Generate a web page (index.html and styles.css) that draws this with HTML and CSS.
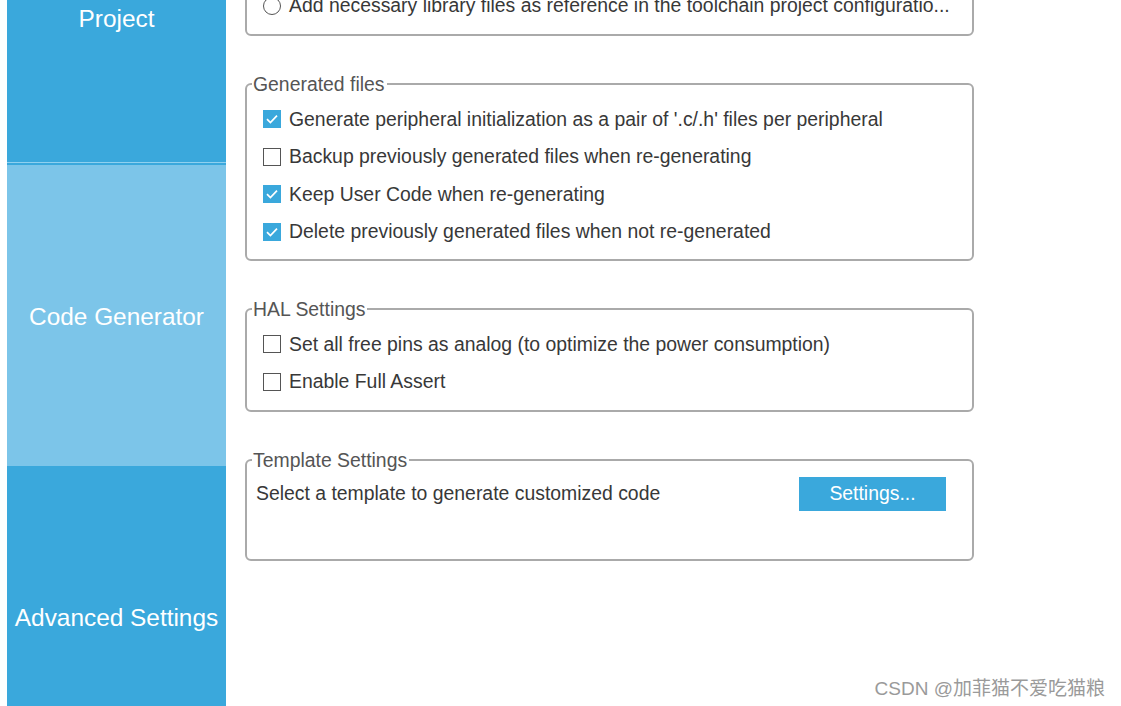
FILE: index.html
```html
<!DOCTYPE html>
<html>
<head>
<meta charset="utf-8">
<link rel="stylesheet" href="styles.css">
</head>
<body>
<div class="page">
  <nav class="sidebar">
    <div class="nav-item project">Project</div>
    <div class="nav-sep"></div>
    <div class="nav-item active">Code Generator</div>
    <div class="nav-item advanced">Advanced Settings</div>
  </nav>
  <main class="main">
    <div class="box box-top">
      <div class="row">
        <span class="radio"></span>
        <span class="label">Add necessary library files as reference in the toolchain project configuratio...</span>
      </div>
    </div>

    <fieldset class="group">
      <legend class="group-title">Generated files</legend>
      <div class="row"><span class="check on"><svg viewBox="0 0 18 18" width="18" height="18"><path d="M4 9.2 L7.4 12.6 L14 5.6" fill="none" stroke="#fff" stroke-width="1.7"/></svg></span><span class="label">Generate peripheral initialization as a pair of '.c/.h' files per peripheral</span></div>
      <div class="row"><span class="check"></span><span class="label">Backup previously generated files when re-generating</span></div>
      <div class="row"><span class="check on"><svg viewBox="0 0 18 18" width="18" height="18"><path d="M4 9.2 L7.4 12.6 L14 5.6" fill="none" stroke="#fff" stroke-width="1.7"/></svg></span><span class="label">Keep User Code when re-generating</span></div>
      <div class="row"><span class="check on"><svg viewBox="0 0 18 18" width="18" height="18"><path d="M4 9.2 L7.4 12.6 L14 5.6" fill="none" stroke="#fff" stroke-width="1.7"/></svg></span><span class="label">Delete previously generated files when not re-generated</span></div>
    </fieldset>

    <fieldset class="group hal">
      <legend class="group-title">HAL Settings</legend>
      <div class="row"><span class="check"></span><span class="label">Set all free pins as analog (to optimize the power consumption)</span></div>
      <div class="row"><span class="check"></span><span class="label">Enable Full Assert</span></div>
    </fieldset>

    <fieldset class="group template">
      <legend class="group-title">Template Settings</legend>
      <div class="template-row">
        <span class="template-text">Select a template to generate customized code</span>
        <button class="btn">Settings...</button>
      </div>
    </fieldset>
  </main>
</div>
<div class="watermark">CSDN @加菲猫不爱吃猫粮</div>
</body>
</html>
```

FILE: styles.css
```css
html, body {
  margin: 0;
  padding: 0;
  background: #fff;
  overflow: hidden;
  height: 706px;
}

body {
  font-family: "Liberation Sans", Arial, sans-serif;
  position: relative;
}

.page {
  display: flex;
  height: 706px;
  overflow: hidden;
}

.sidebar {
  width: 219px;
  margin-left: 7px;
  display: flex;
  flex-direction: column;
  flex-shrink: 0;
}

.nav-item {
  display: flex;
  align-items: center;
  justify-content: center;
  color: #fff;
  font-size: 24.4px;
  flex-shrink: 0;
  box-sizing: border-box;
  padding-top: 3px;
}

.project {
  height: 290px;
  margin-top: -128px;
  background: #3aa8dc;
}

.nav-sep {
  height: 2px;
  border-top: 1px solid #8fd0ef;
  background: #3aa8dc;
  flex-shrink: 0;
}

.active {
  height: 301px;
  background: #7cc5e9;
}

.advanced {
  height: 300px;
  background: #3aa8dc;
}

.main {
  flex: 1;
  padding-left: 19px;
  display: flex;
  flex-direction: column;
  align-items: flex-start;
}

.box,
.group {
  border: 2px solid #aaaaaa;
  border-radius: 6px;
  margin: 0;
  padding: 0 5px;
  box-sizing: content-box;
}

.box-top {
  width: 715px;
  margin-top: -15px;
  padding-bottom: 9px;
}

.group {
  width: 715px;
  margin-top: 38px;
  padding-top: 7px;
  padding-bottom: 8px;
  min-width: 0;
}

.group.hal {
  padding-bottom: 9px;
}

.group-title {
  padding: 0 2px 0 1px;
  font-size: 19.4px;
  line-height: 20px;
  color: #555;
}

.row {
  height: 37.5px;
  display: flex;
  align-items: center;
  padding-left: 11px;
  white-space: nowrap;
}

.label {
  font-size: 19.4px;
  color: #383838;
  margin-left: 8px;
}

.check {
  width: 18px;
  height: 18px;
  box-sizing: border-box;
  border: 1px solid #555;
  background: #fff;
  display: flex;
  flex-shrink: 0;
}

.check.on {
  border: none;
  background: #3aa8dc;
}

.radio {
  width: 18px;
  height: 18px;
  box-sizing: border-box;
  border: 1px solid #555;
  border-radius: 50%;
  flex-shrink: 0;
}

.template {
  padding-top: 7px;
  padding-bottom: 48px;
}

.template-row {
  display: flex;
  align-items: center;
  height: 34px;
  padding-left: 4px;
}

.template-text {
  font-size: 19.4px;
  color: #383838;
  flex: 1;
}

.btn {
  width: 147px;
  height: 34px;
  border: none;
  background: #3aa8dc;
  color: #fff;
  font-family: "Liberation Sans", Arial, sans-serif;
  font-size: 19.4px;
  margin-right: 21px;
  padding: 0;
}

.watermark {
  position: absolute;
  right: 16px;
  bottom: 6px;
  font-family: "Liberation Sans", "Noto Sans CJK SC", sans-serif;
  font-size: 19px;
  color: #9a9a9a;
}
```
